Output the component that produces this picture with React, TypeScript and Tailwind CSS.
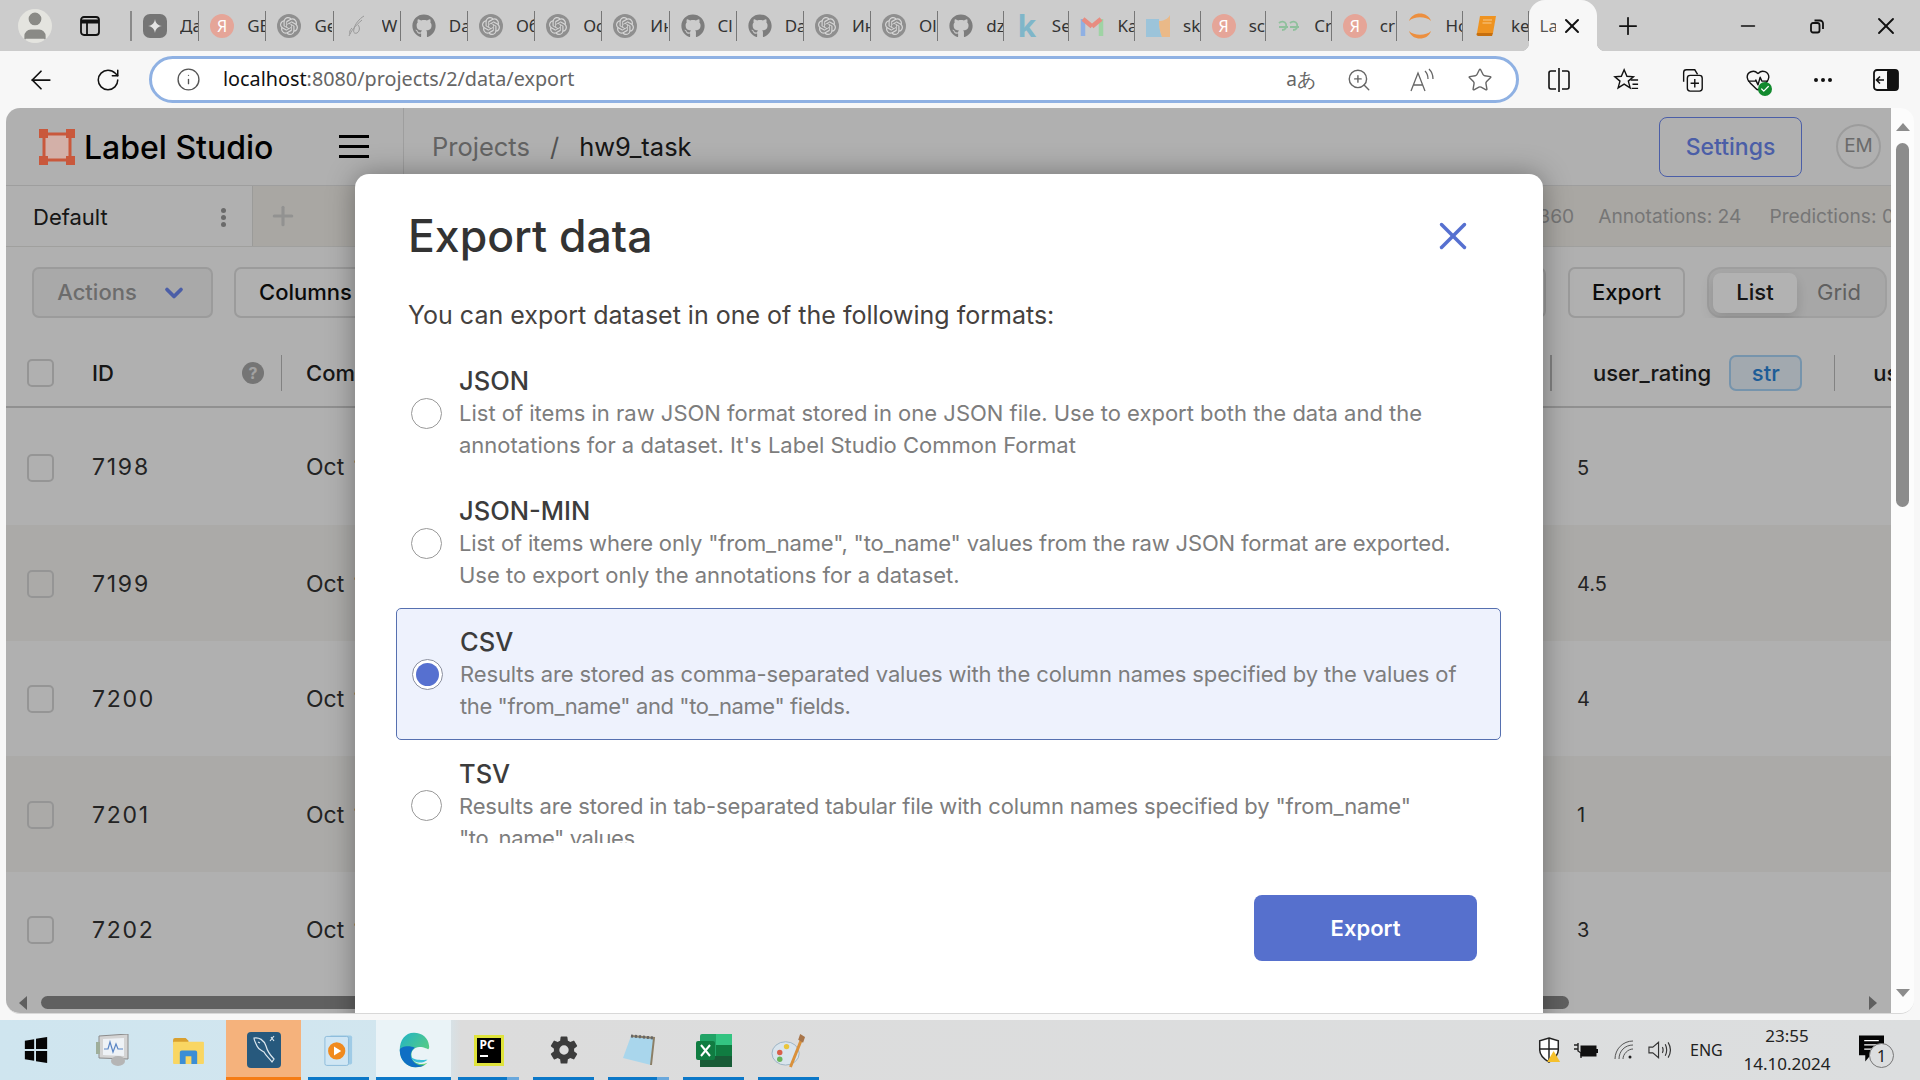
import { ArrowLeft, RotateCw, Info, ZoomIn, Star, MoreHorizontal, HeartPulse, Check, X, Plus, Minus, ChevronDown, User } from "lucide-react";
import { FaGithub } from "react-icons/fa";
import { SiOpenai } from "react-icons/si";
import { IoSettingsSharp } from "react-icons/io5";

const ui = "font-['Inter',sans-serif]";
const win = "font-['Noto_Sans',sans-serif]";

function Knot() {
  return (
    <span className="flex h-[24px] w-[24px] items-center justify-center rounded-full bg-[#8f8f8f]">
      <SiOpenai className="h-[18px] w-[18px] text-[#d6d6d6]" />
    </span>
  );
}

function Yandex() {
  return (
    <span className={`flex h-[24px] w-[24px] items-center justify-center rounded-full bg-[#e5a598] text-[16px] leading-none text-white ${win}`}>
      Я
    </span>
  );
}

function Git() {
  return <FaGithub className="h-[24px] w-[24px] text-[#7d7d7d]" />;
}

function Spark() {
  return (
    <span className="flex h-[24px] w-[24px] items-center justify-center rounded-[7px] bg-[#757575]">
      <svg viewBox="0 0 16 16" className="h-[16px] w-[16px]">
        <path d="M8 1c.6 4 2.6 6.2 7 7-4.400.8-6.400 3-7 7-.6-4-2.600-6.200-7-7 4.400-.8 6.400-3 7-7z" fill="#e4e4e4" />
      </svg>
    </span>
  );
}

function Feather() {
  return (
    <svg viewBox="0 0 24 24" className="h-[24px] w-[24px]" fill="none" stroke="#999" strokeWidth="1">
      <path d="M19 2c-5 3-9 8-10 13-1 3 0 5 3 4 3-2 3-6 1-8M4 22c2-5 6-10 13-16M7 14c-2 2-3 4-2 6" />
    </svg>
  );
}

function KIcon() {
  return <span className={`w-[24px] text-center text-[30px] font-bold leading-none text-[#7fb6c9] ${win}`}>k</span>;
}

function Gmail() {
  return (
    <svg viewBox="0 0 24 24" className="h-[26px] w-[26px]" fill="none" strokeWidth="4.500">
      <path d="M3 22V5" stroke="#8fb0e3" />
      <path d="M21 22V5" stroke="#9fd3a4" />
      <path d="M3 5l9 7.500" stroke="#e88c80" />
      <path d="M21 5l-9 7.500" stroke="#e88c80" />
    </svg>
  );
}

function Shape() {
  return (
    <svg viewBox="0 0 24 24" className="h-[28px] w-[26px]">
      <path d="M0 5h13c0 7 1 13 3 18H0z" fill="#9cc4da" />
      <path d="M24 1v22h-8c-2-5-3-10-3-16 4 0 9-2 11-6z" fill="#eab988" />
    </svg>
  );
}

function Loops() {
  return (
    <svg viewBox="0 0 24 24" className="h-[24px] w-[24px]" fill="none" stroke="#8fc09c" strokeWidth="1.800">
      <path d="M2 9c2-2 6-2 7 1 1 4-1 6-4 6M2 13h9M13 9c2-2 6-2 7 1 1 4-1 6-4 6M13 13h9" />
    </svg>
  );
}

function Jupyter() {
  return (
    <svg viewBox="0 0 24 32" className="h-[32px] w-[24px]">
      <path d="M1 11C4 1 20 1 23 11c-5-5-17-5-22 0z" fill="#ec8f3f" />
      <path d="M1 21c3 10 19 10 22 0-5 5-17 5-22 0z" fill="#ec8f3f" />
    </svg>
  );
}

function Book() {
  return (
    <svg viewBox="0 0 24 24" className="h-[26px] w-[24px]">
      <path d="M6 2h16l-3 17H3z" fill="#ef9320" />
      <path d="M3 19h16l-1 3H4a2 2 0 0 1-1-3z" fill="#c66f0e" />
      <path d="M9 6h9M8.500 9h9" stroke="#f8c98a" strokeWidth="1" />
    </svg>
  );
}

const tabs: [React.ReactNode, string][] = [
  [<Spark />, "Да"],
  [<Yandex />, "GE"],
  [<Knot />, "Ge"],
  [<Feather />, "W"],
  [<Git />, "Da"],
  [<Knot />, "Об"],
  [<Knot />, "Ос"],
  [<Knot />, "Ин"],
  [<Git />, "Cl"],
  [<Git />, "Da"],
  [<Knot />, "Ин"],
  [<Knot />, "Ol"],
  [<Git />, "dz"],
  [<KIcon />, "Se"],
  [<Gmail />, "Ka"],
  [<Shape />, "sk"],
  [<Yandex />, "sc"],
  [<Loops />, "Cr"],
  [<Yandex />, "cr"],
  [<Jupyter />, "Ho"],
  [<Book />, "ke"],
];

function TabStrip() {
  return (
    <div className={`flex h-[51px] shrink-0 items-center bg-[#cccccc] text-[#333] ${win}`}>
      <div className="flex w-[70px] justify-center">
        <span className="flex h-[34px] w-[34px] items-end justify-center overflow-hidden rounded-full bg-[#e4e4df]">
          <User className="h-[34px] w-[34px] text-[#8a8a86]" fill="#8a8a86" strokeWidth={1} />
        </span>
      </div>
      <div className="flex w-[40px] justify-center">
        <svg viewBox="0 0 22 22" className="h-[22px] w-[22px]" fill="none" stroke="#111" strokeWidth="1.800">
          <rect x="2" y="2" width="18" height="18" rx="3" />
          <path d="M2 6.500h18" strokeWidth="4" />
          <path d="M8 7v13" />
        </svg>
      </div>
      <div className="ml-[20px] h-[30px] w-[2px] bg-[#8a8a8a]" />
      {tabs.map(([icon, label], i) => (
        <div key={i} className={`flex h-[30px] shrink-0 items-center overflow-hidden border-r border-[#777] pl-[11px] ${i < 12 ? "w-[67.200px]" : "w-[65.600px]"}`}>
          <span className="flex w-[24px] shrink-0 items-center justify-center">{icon}</span>
          <span className="ml-[13px] w-[18px] overflow-hidden whitespace-nowrap text-[17px] leading-none">{label}</span>
        </div>
      ))}
      <div className="relative flex h-[51px] w-[68px] shrink-0 items-center rounded-t-[16px] bg-[#f7f7f7] pl-[11px]">
        <span className="absolute bottom-0 left-[-8px] h-[8px] w-[8px] bg-[radial-gradient(circle_at_0_0,#cccccc_8px,#f7f7f7_8.500px)]" />
        <span className="absolute bottom-0 right-[-8px] h-[8px] w-[8px] bg-[radial-gradient(circle_at_100%_0,#cccccc_8px,#f7f7f7_8.500px)]" />
        <span className="w-[16px] overflow-hidden whitespace-nowrap text-[17px] leading-none text-[#555]">La</span>
        <X className="ml-[4px] h-[24px] w-[24px] text-[#111]" strokeWidth={2} />
      </div>
      <div className="flex w-[62px] justify-center">
        <Plus className="h-[28px] w-[28px] text-[#111]" strokeWidth={1.500} />
      </div>
      <div className="ml-auto flex items-center">
        <div className="flex w-[69px] justify-center">
          <Minus className="h-[22px] w-[22px] text-[#111]" strokeWidth={1.800} />
        </div>
        <div className="flex w-[69px] justify-center">
          <svg viewBox="0 0 16 16" className="h-[16px] w-[16px]" fill="none" stroke="#111" strokeWidth="1.800">
            <rect x="2" y="5" width="8.500" height="9.500" rx="2" />
            <path d="M5.500 2.500h5.500a3 3 0 0 1 3 3V11" />
          </svg>
        </div>
        <div className="flex w-[69px] justify-center">
          <X className="h-[28px] w-[28px] text-[#111]" strokeWidth={1.600} />
        </div>
      </div>
    </div>
  );
}

function AddressBar() {
  return (
    <div className={`flex h-[57px] shrink-0 items-center bg-[#f7f7f7] ${win}`}>
      <div className="flex w-[82px] justify-center">
        <ArrowLeft className="h-[30px] w-[30px] text-[#111]" strokeWidth={1.400} />
      </div>
      <div className="flex w-[52px] justify-center">
        <RotateCw className="h-[26px] w-[26px] text-[#111]" strokeWidth={1.400} />
      </div>
      <div className="ml-[15px] flex h-[47px] w-[1370px] items-center rounded-[24px] border-[3px] border-[#8fb1e3] bg-white pl-[20px] pr-[12px]">
        <div className="flex w-[32px] justify-center">
          <Info className="h-[25px] w-[25px] text-[#555]" strokeWidth={1.300} />
        </div>
        <div className="mb-[2px] ml-[19px] text-[19.800px] text-[#666]">
          <span className="text-[#111]">localhost</span>:8080/projects/2/data/export
        </div>
        <div className="ml-auto flex items-center text-[#666]">
          <div className="w-[58px] text-center text-[19px] leading-none">aあ</div>
          <div className="flex w-[58px] justify-center">
            <ZoomIn className="h-[26px] w-[26px]" strokeWidth={1.300} />
          </div>
          <div className="flex w-[68px] justify-center">
            <svg viewBox="0 0 28 28" className="h-[28px] w-[28px]" fill="none" stroke="#666" strokeWidth="1.300">
              <path d="M3 25L10 7l7 18M5.500 19h9M17 5c2 2 3 5 3 8M21 3c3 3 4 6 4 10" />
            </svg>
          </div>
          <div className="flex w-[48px] justify-center">
            <Star className="h-[26px] w-[26px]" strokeWidth={1.300} />
          </div>
        </div>
      </div>
      <div className="ml-[6px] flex items-center text-[#111]">
        <div className="flex w-[68px] justify-center">
          <svg viewBox="0 0 24 26" className="h-[26px] w-[24px]" fill="none" stroke="#111" strokeWidth="1.600">
            <path d="M9 4H4a2 2 0 0 0-2 2v14a2 2 0 0 0 2 2h5M15 4h5a2 2 0 0 1 2 2v14a2 2 0 0 1-2 2h-5M12 1v24" />
          </svg>
        </div>
        <div className="flex w-[66px] justify-center">
          <svg viewBox="0 0 28 28" className="h-[26px] w-[26px]" fill="none" stroke="#111" strokeWidth="1.500">
            <path d="M12 3l3 7 7 .6-5.500 4.600 2 7.300-6.500-4-6.500 4 2-7.300L2 10.600 9 10z" />
            <path d="M19 14h8M21 18.500h6M20 23h7" />
          </svg>
        </div>
        <div className="flex w-[66px] justify-center">
          <svg viewBox="0 0 28 28" className="h-[26px] w-[26px]" fill="none" stroke="#111" strokeWidth="1.500">
            <path d="M5 16V6a3 3 0 0 1 3-3h9l3 5" />
            <rect x="9" y="9" width="16" height="17" rx="3" />
            <path d="M17 13v9M12.500 17.500h9" />
          </svg>
        </div>
        <div className="relative flex w-[66px] justify-center">
          <HeartPulse className="h-[26px] w-[26px]" strokeWidth={1.300} />
          <span className="absolute bottom-[-3px] left-[33px] flex h-[14px] w-[14px] items-center justify-center rounded-full bg-[#128a2e]">
            <Check className="h-[10px] w-[10px] text-white" strokeWidth={3} />
          </span>
        </div>
        <div className="flex w-[64px] justify-center">
          <MoreHorizontal className="h-[24px] w-[24px]" strokeWidth={2} />
        </div>
        <div className="flex w-[62px] justify-center">
          <svg viewBox="0 0 26 24" className="h-[24px] w-[26px]">
            <rect x="1" y="2" width="24" height="20" rx="3" fill="none" stroke="#111" strokeWidth="1.800" />
            <rect x="14" y="2" width="11" height="20" rx="2" fill="#111" />
            <path d="M11 12H4M7 8.500L3.500 12 7 15.500" fill="none" stroke="#111" strokeWidth="1.600" />
          </svg>
        </div>
      </div>
    </div>
  );
}

function Checkbox() {
  return <div className="h-[28px] w-[27px] rounded-[5px] border-2 border-[#d6d6d6]" />;
}

const rowCols = "grid grid-cols-[86px_214px_1271px_1fr]";
const rows = [
  { id: "7198", rating: "5", bg: "bg-[#fcfcfc]" },
  { id: "7199", rating: "4.5", bg: "bg-[#f5f4f1]" },
  { id: "7200", rating: "4", bg: "bg-[#fcfcfc]" },
  { id: "7201", rating: "1", bg: "bg-[#f5f4f1]" },
  { id: "7202", rating: "3", bg: "bg-[#fcfcfc]" },
];

function Header() {
  return (
    <div className="flex h-[78px] shrink-0 items-center border-b border-[#e2e2e2] pl-[33px] pr-[10px]">
      <div className="flex h-[36px] items-center">
        <div className="relative z-10 h-[36px] w-[36px]">
          <svg viewBox="0 0 36 36" className="h-[36px] w-[36px]">
            <rect x="5" y="5" width="26" height="26" fill="#d3b0a8" />
            <path d="M5 5h26v26H5z" fill="none" stroke="#c9583c" strokeWidth="3" />
            <path d="M0 0h9v9H0zM27 0h9v9h-9zM0 27h9v9H0zM27 27h9v9h-9z" fill="#c9583c" />
          </svg>
        </div>
        <div className="ml-[9px] mt-[2px] w-[255px] text-[32px] font-medium leading-none text-black">Label Studio</div>
        <div className="flex w-[30px] flex-col gap-[6.500px]">
          <div className="h-[3.500px] bg-black" />
          <div className="h-[3.500px] bg-black" />
          <div className="h-[3.500px] bg-black" />
        </div>
      </div>
      <div className="ml-[34px] h-[78px] w-px self-start bg-[#e2e2e2]" />
      <div className="ml-[28px] mt-[2px] flex items-center text-[25.500px] text-[#8e8e8e]">
        <span>Projects</span>
        <span className="ml-[20px] text-[#777]">/</span>
        <span className="ml-[20px] text-[#222]">hw9_task</span>
      </div>
      <div className="ml-auto flex h-[60px] w-[143px] items-center justify-center rounded-[8px] border-[1.500px] border-[#6c87f0] pt-[2px] text-[23px] font-medium text-[#6c87f0]">
        Settings
      </div>
      <div className="ml-[34px] flex h-[45px] w-[45px] items-center justify-center rounded-full border-2 border-[#e0e0e0] text-[19px] text-[#999]">
        EM
      </div>
    </div>
  );
}

function TabsRow() {
  return (
    <div className="flex h-[61px] shrink-0 items-stretch border-b border-[#e6e6e2] bg-[#f2f0ea]">
      <div className="flex w-[247px] shrink-0 items-center justify-between border-r border-[#dfdfdb] bg-[#fcfcfc] pl-[27px] pr-[26px] pt-[2px] text-[22px] text-[#222]">
        Default
        <div className="flex flex-col gap-[2px]">
          <div className="h-[5px] w-[5px] rounded-full bg-[#999]" />
          <div className="h-[5px] w-[5px] rounded-full bg-[#999]" />
          <div className="h-[5px] w-[5px] rounded-full bg-[#999]" />
        </div>
      </div>
      <div className="flex w-[60px] items-center justify-center">
        <Plus className="h-[30px] w-[30px] text-[#d2d2d0]" strokeWidth={2.500} />
      </div>
      <div className="ml-auto flex items-center gap-[28px] whitespace-nowrap pl-[30px] text-[19.200px] text-[#aaa]">
        <span className="mr-[-4px]">Tasks: 360 / 360</span>
        <span>Annotations: 24</span>
        <span className="mr-[-3px]">Predictions: 0</span>
      </div>
    </div>
  );
}

function Toolbar() {
  const btn = "flex h-[51px] shrink-0 items-center justify-center rounded-[7px] border-2 border-[#dedede] text-[22px] font-medium";
  return (
    <div className="flex h-[71px] shrink-0 items-end pl-[26px]">
      <div className={`${btn} w-[181px] gap-[23px] bg-[#f2f2f2] text-[#9b9b9b]`}>
        Actions
        <ChevronDown className="h-[28px] w-[28px] text-[#6c87f0]" strokeWidth={3.200} />
      </div>
      <div className={`${btn} ml-[21px] w-[200px] justify-start pl-[23px] text-[#111]`}>Columns</div>
      <div className={`${btn} ml-[974px] w-[138px]`} />
      <div className={`${btn} ml-[22px] w-[117px] text-[#111]`}>Export</div>
      <div className="ml-[22px] flex h-[51px] w-[180px] shrink-0 items-center rounded-[14px] border-2 border-[#e4e4e4] bg-[#f0f0f0] pl-[4px] text-[22px]">
        <div className="flex h-[40px] w-[84px] items-center justify-center rounded-[8px] bg-white font-medium text-[#222] shadow-[0_6px_14px_rgba(0,0,0,0.14)]">
          List
        </div>
        <div className="flex w-[84px] justify-center text-[#8a8a8a]">Grid</div>
      </div>
    </div>
  );
}

function TableHead() {
  return (
    <div className={`${rowCols} h-[90px] shrink-0 items-center border-b-2 border-[#cfcfcf] bg-[#fcfcfc] pt-[22px] text-[22px] font-medium text-[#222]`}>
      <div className="pl-[21px]">
        <Checkbox />
      </div>
      <div className="flex items-center justify-between pr-[24px]">
        ID
        <div className="flex items-center gap-[17px]">
          <span className="flex h-[22px] w-[22px] items-center justify-center rounded-full bg-[#a8a8a8] text-[16px] font-bold leading-none text-[#e8e8e8]">?</span>
          <span className="h-[36px] w-px bg-[#bbb]" />
        </div>
      </div>
      <div className="flex items-center justify-between pr-[25px]">
        Completed
        <span className="h-[36px] w-[2px] bg-[#bbb]" />
      </div>
      <div className="flex items-center overflow-hidden whitespace-nowrap pl-[16px]">
        user_rating
        <span className="ml-[18px] flex h-[36px] w-[73px] shrink-0 items-center justify-center rounded-[7px] border-2 border-[#a9d4f7] bg-[#e8f2fb] text-[#2a85d8]">str</span>
        <span className="ml-[32px] h-[36px] w-px shrink-0 bg-[#bbb]" />
        <span className="ml-[38px]">user</span>
      </div>
    </div>
  );
}

function TableBody() {
  return (
    <>
      {rows.map((r, i) => (
        <div key={r.id} className={`${rowCols} ${i === 0 ? "h-[117px]" : "h-[115.500px]"} shrink-0 items-center pt-[2px] text-[23px] text-[#333] ${r.bg}`}>
          <div className="pl-[21px]">
            <Checkbox />
          </div>
          <div className="tracking-[1.750px]">{r.id}</div>
          <div className="whitespace-nowrap [word-spacing:3px]">Oct 1</div>
          <div className="text-[20px]">{r.rating}</div>
        </div>
      ))}
    </>
  );
}

function HScroll() {
  return (
    <div className="flex flex-1 items-center bg-[#fcfcfc] pt-[5px]">
      <svg viewBox="0 0 8 14" className="ml-[13px] h-[14px] w-[8px]">
        <path d="M8 0v14L0 7z" fill="#888" />
      </svg>
      <div className="ml-[14px] h-[13px] w-[1528px] rounded-full bg-[#8a8a8a]" />
      <svg viewBox="0 0 8 14" className="ml-[300px] h-[14px] w-[8px]">
        <path d="M0 0v14l8-7z" fill="#888" />
      </svg>
    </div>
  );
}

function VScroll() {
  return (
    <div className="flex w-[23px] shrink-0 flex-col items-center bg-[#fcfcfc]">
      <svg viewBox="0 0 14 8" className="mt-[15px] h-[8px] w-[14px]">
        <path d="M0 8h14L7 0z" fill="#8c8c8c" />
      </svg>
      <div className="mt-[12px] h-[364px] w-[13px] rounded-full bg-[#8c8c8c]" />
      <svg viewBox="0 0 14 8" className="mb-[16px] mt-auto h-[8px] w-[14px]">
        <path d="M0 0h14L7 8z" fill="#8c8c8c" />
      </svg>
    </div>
  );
}

const options = [
  {
    name: "JSON",
    height: "h-[130px]",
    lines: [
      { text: "List of items in raw JSON format stored in one JSON file. Use to export both the data and the", track: "" },
      { text: "annotations for a dataset. It's Label Studio Common Format", track: "" },
    ],
  },
  {
    name: "JSON-MIN",
    height: "h-[130px]",
    lines: [
      { text: 'List of items where only "from_name", "to_name" values from the raw JSON format are exported.', track: "tracking-[-0.170px]" },
      { text: "Use to export only the annotations for a dataset.", track: "" },
    ],
  },
  {
    name: "CSV",
    height: "h-[132px]",
    selected: true,
    lines: [
      { text: "Results are stored as comma-separated values with the column names specified by the values of", track: "tracking-[-0.130px]" },
      { text: 'the "from_name" and "to_name" fields.', track: "tracking-[-0.400px]" },
    ],
  },
  {
    name: "TSV",
    height: "h-[131px]",
    lines: [
      { text: 'Results are stored in tab-separated tabular file with column names specified by "from_name"', track: "tracking-[-0.150px]" },
      { text: '"to_name" values', track: "tracking-[-0.400px]" },
    ],
  },
];

function ExportModal() {
  return (
    <div className={`absolute left-[349px] top-[66px] z-20 flex h-[900px] w-[1188px] flex-col rounded-t-[14px] bg-white shadow-[0_0_28px_rgba(0,0,0,0.35)] ${ui}`}>
      <div className="mt-[31px] flex h-[62px] items-center justify-between pl-[53px] pr-[67px]">
        <h1 className="text-[44.500px] font-medium leading-none text-[#333]">Export data</h1>
        <X className="h-[46px] w-[46px] text-[#5670d0]" strokeWidth={1.800} />
      </div>
      <p className="ml-[53px] mt-[32px] text-[25px] leading-[32px] text-[#45413e]">You can export dataset in one of the following formats:</p>
      <div className="ml-[41px] mt-[17px] h-[495px] w-[1105px] overflow-hidden">
        {options.map((o) => (
          <div key={o.name} className={`flex items-center rounded-[5px] border ${o.height} ${o.selected ? "border-[#5670b0] bg-[#eef2fd] pl-[15px]" : "border-transparent pl-[14px]"}`}>
            {o.selected ? (
              <span className="flex h-[31px] w-[31px] shrink-0 items-center justify-center rounded-full border border-[#8a8f9f] bg-white">
                <span className="h-[23px] w-[23px] rounded-full bg-[#5670d0]" />
              </span>
            ) : (
              <span className="h-[31px] w-[31px] shrink-0 rounded-full border border-[#999]" />
            )}
            <div className="ml-[17px] whitespace-nowrap">
              <div className="text-[25.500px] font-medium leading-[32px] text-[#3c3c3c]">{o.name}</div>
              {o.lines.map((l) => (
                <div key={l.text} className={`text-[22px] leading-[32px] text-[#7d7d7d] ${l.track}`}>
                  {l.text}
                </div>
              ))}
            </div>
          </div>
        ))}
      </div>
      <div className="ml-[899px] mt-[52px] flex h-[66px] w-[223px] items-center justify-center rounded-[8px] bg-[#5670cd] text-[22px] font-semibold text-white">
        Export
      </div>
    </div>
  );
}

function LabelStudio() {
  return (
    <div className="relative flex min-w-0 flex-1 flex-col overflow-hidden">
      <div className={`flex h-full flex-col bg-[#fcfcfc] ${ui}`}>
        <Header />
        <TabsRow />
        <Toolbar />
        <TableHead />
        <TableBody />
        <HScroll />
      </div>
      <div className="absolute inset-0 bg-black/30" />
      <ExportModal />
    </div>
  );
}

function Taskbar() {
  const cell = "relative flex h-[60px] w-[75px] shrink-0 items-center justify-center";
  const bar = "absolute inset-x-[7px] bottom-0 h-[3px] bg-[#0c78c8]";
  const tip = "absolute bottom-0 right-[7px] h-[3px] w-[12px] bg-[#6aa8dc]";
  return (
    <div className={`flex h-[60px] shrink-0 bg-[linear-gradient(90deg,#cfe5ef_0%,#d2e6ef_23%,#dcdcdc_24%,#dcdedf_100%)] ${win}`}>
      <div className={`${cell} w-[76px] pr-[4px]`}>
        <svg viewBox="0 0 24 28" className="h-[26px] w-[24px]">
          <path d="M0 4l10-1.500V13H0zM12 2l12-2v13H12zM0 15h10v10.500L0 24zM12 15h12v13l-12-2z" fill="#050505" />
        </svg>
      </div>
      <div className={cell}>
        <svg viewBox="0 0 36 32" className="h-[32px] w-[36px]">
          <path d="M3 2l29-2v25l-29-1z" fill="#d4d4d4" stroke="#8b8b8b" />
          <path d="M7 5l21-1v18l-21-1z" fill="#eef2f6" />
          <path d="M8 15h4l2-7 3 10 3-8 2 5h5" fill="none" stroke="#5b86c5" strokeWidth="1.200" />
          <ellipse cx="22" cy="27" rx="7" ry="5" fill="#b5b5b5" />
          <rect x="0" y="8" width="4" height="12" fill="#9fae9b" />
        </svg>
      </div>
      <div className={cell}>
        <svg viewBox="0 0 32 28" className="h-[27px] w-[31px]">
          <path d="M0 3a2 2 0 0 1 2-2h11l3 3v4H0z" fill="#d9a02f" />
          <rect x="0" y="5" width="32" height="23" rx="1" fill="#f9d662" />
          <path d="M7 28V16a2 2 0 0 1 2-2h14a2 2 0 0 1 2 2v12h-6v-8h-6v8z" fill="#3b8ed6" />
        </svg>
      </div>
      <div className={`${cell} bg-[#f5b27c]`}>
        <span className="flex h-[36px] w-[34px] items-center justify-center rounded-[4px] bg-[#27597d]">
          <svg viewBox="0 0 34 36" className="h-[36px] w-[34px]" fill="none" stroke="#dbe7ef" strokeWidth="1.200">
            <path d="M7 6c5-1 10 2 12 8 1 4 3 8 8 13l-2 3c-3-4-6-6-8-10-3-2-6-3-7-6-1-3-3-5-3-8z" />
            <path d="M11 10l2 1M24 5l3 4M27 4l-4 5" />
          </svg>
        </span>
        <div className="absolute inset-x-0 bottom-0 h-[3px] bg-[#f57c14]" />
      </div>
      <div className={cell}>
        <svg viewBox="0 0 32 34" className="h-[32px] w-[29px]">
          <rect x="6" y="1" width="25" height="32" rx="2" fill="#9fcbe6" />
          <rect x="1" y="2" width="26" height="32" rx="2" fill="#cfe6f4" stroke="#88b8d8" />
          <circle cx="14" cy="18" r="9.500" fill="#f08a1e" />
          <path d="M11 13l8 5-8 5z" fill="#fff" />
        </svg>
        <div className={bar} />
      </div>
      <div className={`${cell} bg-[#eaf3f7]`}>
        <svg viewBox="0 0 40 48" className="h-[36px] w-[36px]">
          <defs>
            <linearGradient id="edgeTop" x1="0" y1="0" x2="1" y2="1">
              <stop offset="0" stopColor="#1fb3c8" />
              <stop offset="1" stopColor="#6cd46a" />
            </linearGradient>
          </defs>
          <path d="M20 1C8 1 1 11 1 24c0 14 10 23 21 23 7 0 12-2 16-6-9 4-19 1-21-8-2-8 4-13 10-13 7 0 12 3 12 3 2-1 1-5 1-5C39 8 31 1 20 1z" fill="url(#edgeTop)" />
          <path d="M1 24c0 14 10 23 21 23 5 0 9-1 12-3-8 2-16-3-18-11-1-6 2-10 5-12-5-3-19-3-20 3z" fill="#0f6fc4" />
          <path d="M16 33c2 7 10 9 17 7 3-1 5-3 5-3-2 0-16 2-22-4z" fill="#3bc0d8" />
        </svg>
        <div className="absolute inset-x-0 bottom-0 h-[3px] bg-[#0c78c8]" />
      </div>
      <div className={cell}>
        <span className="flex h-[31px] w-[30px] flex-col border-[3px] border-[#dfe33c] bg-black px-[3px] text-[12px] font-bold leading-[14px] text-white">
          PC
          <span className="mt-[3px] h-[2px] w-[8px] bg-white" />
        </span>
        <div className={bar} />
        <div className={tip} />
      </div>
      <div className={cell}>
        <IoSettingsSharp className="h-[30px] w-[30px] text-[#3c3c3c]" />
        <div className={bar} />
      </div>
      <div className={cell}>
        <svg viewBox="0 0 34 32" className="h-[32px] w-[34px]">
          <path d="M9 2l23 2-3 27L1 24z" fill="#a9d6ec" />
          <path d="M9 2l23 2-3 27" fill="none" stroke="#8c7f66" strokeWidth="2" />
          <path d="M9 2l23 2" stroke="#666" strokeWidth="3" strokeDasharray="2 2" />
        </svg>
        <div className={bar} />
        <div className={tip} />
      </div>
      <div className={cell}>
        <svg viewBox="0 0 36 33" className="h-[33px] w-[36px]">
          <rect x="4" y="0" width="32" height="33" rx="2" fill="#21a366" />
          <rect x="20" y="0" width="16" height="11" fill="#33c481" />
          <rect x="20" y="11" width="16" height="11" fill="#107c41" />
          <rect x="4" y="22" width="32" height="11" fill="#185c37" />
          <rect x="0" y="7" width="19" height="19" rx="2" fill="#107c41" />
          <path d="M5 11l9 11M14 11l-9 11" stroke="#fff" strokeWidth="2" />
        </svg>
        <div className={bar} />
      </div>
      <div className={cell}>
        <svg viewBox="0 0 36 36" className="h-[35px] w-[35px]">
          <ellipse cx="15" cy="21" rx="14" ry="12" fill="#d9e4ec" stroke="#9db4c4" />
          <circle cx="9" cy="20" r="2.800" fill="#d95f4a" />
          <circle cx="16" cy="14" r="2.800" fill="#e9c53c" />
          <circle cx="9" cy="27" r="2.800" fill="#69b55a" />
          <path d="M32 5L20 35" stroke="#d9913c" strokeWidth="3" />
          <path d="M30 1l5 3-2 6-5-3z" fill="#a8754a" />
        </svg>
        <div className={bar} />
      </div>
      <div className="ml-auto flex items-center text-[#222]">
        <div className="relative h-[26px] w-[24px]">
          <svg viewBox="0 0 24 28" className="h-[26px] w-[24px]">
            <path d="M12 1l10 3v10c0 6-5 10-10 13C7 24 2 20 2 14V4z" fill="#fff" stroke="#222" strokeWidth="1.600" />
            <path d="M12 1v26M2 13h20" stroke="#222" strokeWidth="1.600" />
            <path d="M17 15l7 12H10z" fill="#f5c02c" />
          </svg>
        </div>
        <div className="ml-[13px]">
          <svg viewBox="0 0 24 18" className="h-[18px] w-[24px]">
            <path d="M0 4h4M0 8h4M4 2v8l3 2v5" fill="none" stroke="#222" strokeWidth="1.400" />
            <rect x="7" y="5" width="15" height="10" fill="#111" stroke="#111" />
            <rect x="22" y="8" width="2" height="4" fill="#111" />
          </svg>
        </div>
        <div className="ml-[16px]">
          <svg viewBox="0 0 20 20" className="h-[20px] w-[20px]" fill="none" stroke="#555" strokeWidth="1">
            <path d="M1 19C1 9 9 1 19 1M5 19c0-8 6-14 14-14M9 19c0-5 5-10 10-10" />
            <circle cx="16" cy="17" r="1.500" fill="#222" stroke="none" />
          </svg>
        </div>
        <div className="ml-[14px]">
          <svg viewBox="0 0 24 20" className="h-[20px] w-[23px]" fill="none" stroke="#333" strokeWidth="1.200">
            <path d="M1 7v6h4l6 5V2L5 7zM15 7c1 2 1 4 0 6M18 4c2 4 2 8 0 12M21 2c3 5 3 11 0 16" />
          </svg>
        </div>
        <div className="ml-[19px] w-[36px] text-[16px]">ENG</div>
        <div className="ml-[17px] flex w-[88px] flex-col items-center text-[17px] leading-[28px]">
          <span>23:55</span>
          <span>14.10.2024</span>
        </div>
        <div className="relative ml-[28px] mr-[36px] h-[30px] w-[25px]">
          <svg viewBox="0 0 24 26" className="h-[28px] w-[25px]">
            <path d="M0 0h24v19H11l-5 6v-6H0z" fill="#050505" />
            <path d="M5 5h14M5 9h14M5 13h10" stroke="#fff" strokeWidth="1.200" />
          </svg>
          <span className="absolute left-[10px] top-[8px] flex h-[25px] w-[25px] items-center justify-center rounded-full border border-[#777] bg-[#dcdedf] text-[16px] leading-none">1</span>
        </div>
      </div>
    </div>
  );
}

export default function App() {
  return (
    <div className="flex h-[1080px] w-[1920px] flex-col overflow-hidden bg-[#f7f7f7]">
      <TabStrip />
      <AddressBar />
      <div className="h-[912px] shrink-0 px-[6px] pb-[6px]">
        <div className="flex h-full overflow-hidden rounded-[14px] border-b border-[#d8d8d8]">
          <LabelStudio />
          <VScroll />
        </div>
      </div>
      <Taskbar />
    </div>
  );
}
